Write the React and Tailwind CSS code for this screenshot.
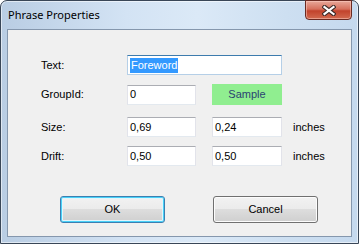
import React from "react";

const font = { fontFamily: '"Liberation Sans", Arial, sans-serif' };

const Field = ({ value, width, focused }) => (
  <div
    className={`h-[20px] ${width} flex items-center px-[2px] bg-white text-[11px] text-black border ${
      focused
        ? "border-[#3d7bad] border-x-[#b5cfe7] border-b-[#b5cfe7]"
        : "border-[#abadb3] border-x-[#e2e3ea] border-b-[#e3e9ef]"
    }`}
  >
    {focused ? (
      <span className="bg-[#3399ff] text-white px-[1px] leading-[15px]">{value}</span>
    ) : (
      <span className="leading-[15px]">{value}</span>
    )}
  </div>
);

const Label = ({ children }) => (
  <div className="w-[86px] text-[11px] text-black">{children}</div>
);

const Button = ({ children, primary }) => (
  <div
    className={`w-[105px] h-[27px] flex items-center justify-center rounded-[3px] border text-[11px] text-black bg-[linear-gradient(#f2f2f2_0%,#ebebeb_50%,#dddddd_50%,#cfcfcf_100%)] ${
      primary
        ? "border-[#3c7fb1] shadow-[inset_0_0_0_1px_#48d1f8,inset_0_0_0_2px_#e2f5fc]"
        : "border-[#707070] shadow-[inset_0_0_0_1px_#fcfcfc]"
    }`}
  >
    {children}
  </div>
);

const CloseGlyph = () => (
  <svg width="14" height="11" viewBox="0 0 14 11">
    <path d="M2.5 2 L11.5 9 M11.5 2 L2.5 9" stroke="#3b2a28" strokeWidth="4.2" strokeLinecap="square" />
    <path d="M2.5 2 L11.5 9 M11.5 2 L2.5 9" stroke="#ffffff" strokeWidth="2.2" strokeLinecap="square" />
  </svg>
);

export default function App() {
  return (
    <div className="w-[359px] h-[244px] bg-white" style={font}>
      <div className="w-full h-full flex flex-col rounded-t-[7px] border border-[#394657] px-[6px] pb-[6px] bg-[linear-gradient(to_right,#b9cde3,#d3e3f4_35%,#dbe9f7_55%,#cddff1_80%,#c5d9ee)] shadow-[inset_0_0_0_1px_rgba(255,255,255,0.55)]">
        <div className="h-[28px] flex items-start justify-between">
          <div
            className="pl-[1px] mt-[6px] text-[11px] leading-[16px] text-black"
            style={{ fontFamily: '"Noto Sans", "Open Sans", sans-serif' }}
          >
            Phrase Properties
          </div>
          <div className="-mt-px w-[47px] h-[20px] flex items-center justify-center rounded-b-[4px] border border-[#6a2a22] bg-[linear-gradient(#e8a89a_0%,#d6705d_45%,#c2432c_55%,#d26a4f_100%)] shadow-[inset_0_0_0_1px_rgba(255,210,200,0.5)]">
            <CloseGlyph />
          </div>
        </div>
        <div className="flex-1 border border-[#8597ad] bg-[#f0f0f0] pt-[25px] pl-[33px] flex flex-col">
          <div className="flex items-center">
            <Label>Text:</Label>
            <Field value="Foreword" width="w-[155px]" focused />
          </div>
          <div className="flex items-center mt-[9px]">
            <Label>GroupId:</Label>
            <Field value="0" width="w-[69px]" />
            <div className="ml-[16px] w-[70px] h-[21px] bg-[#90ee90] flex items-center justify-center text-[11px] text-[#2a4372]">
              Sample
            </div>
          </div>
          <div className="flex items-center mt-[12px]">
            <Label>Size:</Label>
            <Field value="0,69" width="w-[69px]" />
            <div className="ml-[16px]">
              <Field value="0,24" width="w-[70px]" />
            </div>
            <div className="ml-[11px] text-[11px] text-black">inches</div>
          </div>
          <div className="flex items-center mt-[9px]">
            <Label>Drift:</Label>
            <Field value="0,50" width="w-[69px]" />
            <div className="ml-[16px]">
              <Field value="0,50" width="w-[70px]" />
            </div>
            <div className="ml-[11px] text-[11px] text-black">inches</div>
          </div>
          <div className="flex mt-[30px] ml-[19px] gap-[48px]">
            <Button primary>OK</Button>
            <Button>Cancel</Button>
          </div>
        </div>
      </div>
    </div>
  );
}
